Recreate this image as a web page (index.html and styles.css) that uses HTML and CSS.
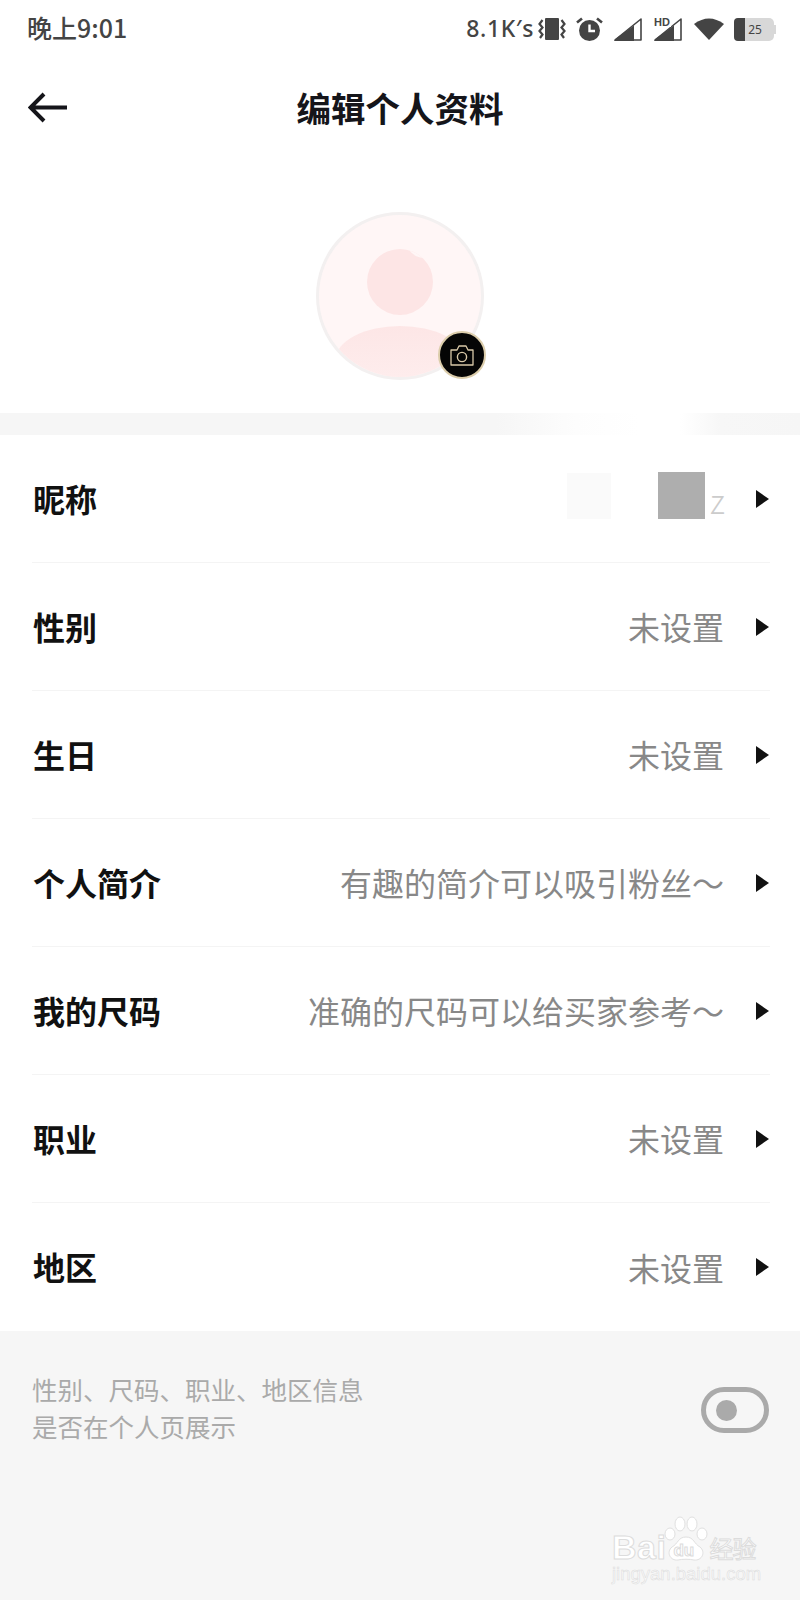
FILE: index.html
```html
<!DOCTYPE html>
<html lang="zh-CN">
<head>
  <meta charset="UTF-8" />
  <meta name="viewport" content="width=device-width, initial-scale=1" />
  <title>编辑个人资料</title>
  <link rel="stylesheet" href="styles.css">
</head>
<body>
  <div class="page">
    <div class="status-bar">
      <span class="status-time">晚上9:01</span>
      <div class="status-icons">
        <span class="status-speed">8.1K′s</span>
        <svg class="icon-vibrate" width="28" height="22" viewBox="0 0 28 22">
          <rect x="7" y="0" width="14" height="22" rx="1" fill="#444"/>
          <path d="M4.5 2 L1.5 6 L4.5 9.5 L1.5 13 L4.5 16.5 L2 20" fill="none" stroke="#444" stroke-width="2.2"/>
          <path d="M23.5 2 L26.5 6 L23.5 9.5 L26.5 13 L23.5 16.5 L26 20" fill="none" stroke="#444" stroke-width="2.2"/>
        </svg>
        <svg class="icon-alarm" width="27" height="24" viewBox="0 0 27 24">
          <circle cx="13.5" cy="13.5" r="10.5" fill="#444"/>
          <path d="M13.5 7.5 V14 H19" fill="none" stroke="#fff" stroke-width="2.4"/>
          <path d="M1 5.5 L6 1.5" stroke="#444" stroke-width="2.6"/>
          <path d="M26 5.5 L21 1.5" stroke="#444" stroke-width="2.6"/>
        </svg>
        <svg class="icon-signal" width="28" height="23" viewBox="0 0 28 23">
          <path d="M27 1 V22 H1 Z" fill="#fff" stroke="#444" stroke-width="1.6" stroke-linejoin="round"/>
          <path d="M20 7.5 V23 H0 L2 20.5 Z" fill="#444"/>
        </svg>
        <svg class="icon-signal-hd" width="28" height="24" viewBox="0 0 28 24">
          <path d="M27 2 V23 H1 Z" fill="#fff" stroke="#444" stroke-width="1.6" stroke-linejoin="round"/>
          <path d="M20 8.5 V24 H0 L2 21.5 Z" fill="#444"/>
          <rect x="0" y="0" width="17" height="10" fill="#fff"/>
          <text class="hd-label" x="0" y="9">HD</text>
        </svg>
        <svg class="icon-wifi" width="30" height="22" viewBox="0 0 30 22">
          <path d="M0 6 Q15 -5 30 6 L15 22 Z" fill="#444"/>
        </svg>
        <div class="battery">
          <span class="battery-level"></span>
          <span class="battery-text">25</span>
        </div>
      </div>
    </div>

    <div class="nav-bar">
      <svg class="nav-back" width="40" height="32" viewBox="0 0 40 32">
        <path d="M39 15.5 H3 M16 2 L2.5 15.5 L16 29" fill="none" stroke="#15151a" stroke-width="4"/>
      </svg>
      <h1 class="nav-title">编辑个人资料</h1>
    </div>

    <div class="avatar-section">
      <div class="avatar">
        <span class="avatar-head"></span>
        <span class="avatar-body"></span>
      </div>
      <div class="avatar-camera">
        <svg width="24" height="21" viewBox="0 0 24 21">
          <path d="M1 5 H7 L9 1 H16 L18 5 H23 V20 H1 Z" fill="none" stroke="#d9c9a8" stroke-width="1.3" stroke-linejoin="round"/>
          <circle cx="12" cy="12" r="4.6" fill="none" stroke="#d9c9a8" stroke-width="1.4"/>
        </svg>
      </div>
    </div>

    <div class="band"></div>

    <div class="form-list">
      <div class="form-row">
        <span class="form-label">昵称</span>
        <div class="form-value nick-value">
          <span class="nick-light"></span>
          <span class="nick-dark"></span>
          <span class="nick-z">z</span>
        </div>
        <span class="form-arrow"></span>
      </div>
      <div class="form-row">
        <span class="form-label">性别</span>
        <span class="form-value">未设置</span>
        <span class="form-arrow"></span>
      </div>
      <div class="form-row">
        <span class="form-label">生日</span>
        <span class="form-value">未设置</span>
        <span class="form-arrow"></span>
      </div>
      <div class="form-row">
        <span class="form-label">个人简介</span>
        <span class="form-value">有趣的简介可以吸引粉丝～</span>
        <span class="form-arrow"></span>
      </div>
      <div class="form-row">
        <span class="form-label">我的尺码</span>
        <span class="form-value">准确的尺码可以给买家参考～</span>
        <span class="form-arrow"></span>
      </div>
      <div class="form-row">
        <span class="form-label">职业</span>
        <span class="form-value">未设置</span>
        <span class="form-arrow"></span>
      </div>
      <div class="form-row">
        <span class="form-label">地区</span>
        <span class="form-value">未设置</span>
        <span class="form-arrow"></span>
      </div>
    </div>

    <div class="footer-section">
      <p class="footer-text">性别、尺码、职业、地区信息<br>是否在个人页展示</p>
      <div class="toggle"><span class="toggle-dot"></span></div>
    </div>

    <div class="watermark">
      <div class="wm-logo">
        <span class="wm-bai">Bai</span>
        <div class="wm-paw">
          <svg width="44" height="46" viewBox="0 0 44 46">
            <ellipse cx="6" cy="18" rx="5" ry="6" fill="#fff" stroke="#e0e0e0"/>
            <ellipse cx="16" cy="8" rx="5" ry="7" fill="#fff" stroke="#e0e0e0"/>
            <ellipse cx="28" cy="8" rx="5" ry="7" fill="#fff" stroke="#e0e0e0"/>
            <ellipse cx="38" cy="18" rx="5" ry="6" fill="#fff" stroke="#e0e0e0"/>
            <path d="M22 21 C30 21 30 28 36 31 C42 36 38 45 30 44 C26 43 18 43 14 44 C6 45 2 36 8 31 C14 28 14 21 22 21 Z" fill="#fff" stroke="#e0e0e0"/>
          </svg>
          <span class="wm-du">du</span>
        </div>
        <span class="wm-cn">经验</span>
      </div>
      <div class="wm-url">jingyan.baidu.com</div>
    </div>
  </div>
</body>
</html>
```

FILE: styles.css
```css
* {
  box-sizing: border-box;
}
body {
  margin: 0;
  font-family: "Noto Sans CJK SC", "Noto Sans", sans-serif;
  background: #f6f6f6;
}
.page {
  position: relative;
  width: 800px;
  height: 1600px;
  overflow: hidden;
  display: flex;
  flex-direction: column;
  background: #f6f6f6;
}

/* status bar */
.status-bar {
  height: 58px;
  padding: 0 24px 0 27px;
  display: flex;
  align-items: center;
  justify-content: space-between;
  background: #fff;
  color: #444;
}
.status-time {
  margin-top: -4px;
  font-size: 25px;
  font-weight: 500;
}
.status-icons {
  display: flex;
  align-items: center;
}
.status-speed {
  margin-top: -2px;
  margin-right: 4px;
  font-family: "Noto Sans", sans-serif;
  font-size: 23px;
  font-weight: 500;
  letter-spacing: 0.6px;
}
.icon-vibrate { margin-right: 10px; }
.icon-alarm { margin-right: 11px; }
.icon-signal { margin-right: 12px; }
.icon-signal-hd { margin-right: 12px; }
.icon-wifi { margin-right: 10px; }
.hd-label {
  font-family: "Liberation Sans", sans-serif;
  font-size: 11px;
  font-weight: 700;
  fill: #444;
}
.battery {
  position: relative;
  width: 40px;
  height: 23px;
  margin-right: 2px;
  border-radius: 5px;
  background: #d8d8d8;
  display: flex;
  align-items: center;
  justify-content: center;
  padding-left: 2px;
}
.battery::after {
  content: "";
  position: absolute;
  right: -2px;
  top: 7px;
  width: 2px;
  height: 9px;
  background: #d8d8d8;
}
.battery-level {
  position: absolute;
  left: 0;
  top: 0;
  bottom: 0;
  width: 11px;
  border-radius: 4px 0 0 4px;
  background: #444;
}
.battery-text {
  font-family: "Noto Sans", sans-serif;
  font-size: 12px;
  color: #444;
}

/* nav */
.nav-bar {
  position: relative;
  height: 100px;
  padding-left: 28px;
  display: flex;
  align-items: center;
  background: #fff;
}
.nav-title {
  position: absolute;
  left: 0;
  right: 0;
  margin: -2px 0 0;
  text-align: center;
  font-size: 34.5px;
  font-weight: 700;
  color: #15151a;
}

/* avatar */
.avatar-section {
  position: relative;
  height: 255px;
  padding-top: 54px;
  display: flex;
  justify-content: center;
  background: #fff;
}
.avatar {
  position: relative;
  width: 168px;
  height: 168px;
  border-radius: 50%;
  border: 3px solid #f3f0f0;
  background: #fff6f6;
  overflow: hidden;
}
.avatar-head {
  position: absolute;
  left: 48px;
  top: 34px;
  width: 66px;
  height: 66px;
  border-radius: 50%;
  overflow: hidden;
  background: #fde5e5;
}
.avatar-head::after {
  content: "";
  position: absolute;
  right: 0;
  top: -9px;
  width: 26px;
  height: 17px;
  border-radius: 50%;
  background: #fff6f6;
  transform: rotate(25deg);
}
.avatar-body {
  position: absolute;
  left: 17px;
  top: 111px;
  width: 128px;
  height: 66px;
  border-radius: 50%;
  background: linear-gradient(180deg, #fde6e6, #feeeee);
}
.avatar-camera {
  position: absolute;
  left: 438px;
  top: 173px;
  width: 48px;
  height: 48px;
  border-radius: 50%;
  border: 2px solid #dccdab;
  background: #050505;
  display: flex;
  align-items: center;
  justify-content: center;
}

.band {
  height: 22px;
  background: linear-gradient(90deg, #f6f6f6 0%, #f6f6f6 62%, #fdfdfd 72%, #fff 80%, #fff 85%, #f7f7f7 90%, #f6f6f6 100%);
}

/* rows */
.form-list {
  padding: 0 30px 0 32px;
  background: #fff;
}
.form-row {
  height: 128px;
  display: flex;
  align-items: center;
  border-bottom: 1px solid #f4f4f4;
}
.form-row:last-child {
  border-bottom: 0;
}
.form-label {
  flex: none;
  margin: -2px 0 0 1px;
  font-size: 32px;
  font-weight: 700;
  color: #111;
}
.form-value {
  flex: 1;
  margin-top: -1px;
  text-align: right;
  font-size: 32px;
  color: #888;
}
.form-arrow {
  flex: none;
  margin-left: 32px;
  margin-right: 1px;
  width: 0;
  height: 0;
  border-left: 13px solid #111;
  border-top: 9px solid transparent;
  border-bottom: 9px solid transparent;
}
.nick-value {
  display: flex;
  justify-content: flex-end;
  align-items: center;
  margin-top: 0;
}
.nick-light {
  width: 44px;
  height: 46px;
  margin-right: 47px;
  margin-bottom: 6px;
  background: #fafafa;
}
.nick-dark {
  width: 47px;
  height: 47px;
  margin-bottom: 6px;
  background: #aeaeae;
}
.nick-z {
  margin-left: 5px;
  margin-top: 3px;
  width: 14px;
  font-size: 33px;
  font-weight: 300;
  line-height: 28px;
  color: #ccc;
}

/* footer */
.footer-section {
  flex: 1;
  padding: 39px 31px 0 32px;
  display: flex;
  justify-content: space-between;
  align-items: flex-start;
}
.footer-text {
  margin: 0;
  font-size: 25.5px;
  line-height: 37px;
  color: #aaa;
}
.toggle {
  width: 68px;
  height: 46px;
  margin-top: 17px;
  padding-left: 10px;
  border: 5px solid #aaa;
  border-radius: 23px;
  display: flex;
  align-items: center;
}
.toggle-dot {
  width: 21px;
  height: 21px;
  border-radius: 50%;
  background: #aaa;
}

/* baidu watermark */
.watermark {
  position: absolute;
  left: 612px;
  top: 1516px;
  width: 146px;
  color: #fff;
}
.wm-logo {
  display: flex;
  align-items: flex-end;
  height: 48px;
  font-family: "Liberation Sans", sans-serif;
  -webkit-text-stroke: 1px #dcdcdc;
}
.wm-bai {
  font-size: 34px;
  font-weight: 700;
  line-height: 34px;
  letter-spacing: 0.5px;
}
.wm-paw {
  position: relative;
  width: 44px;
  height: 48px;
  margin-left: -2px;
}
.wm-du {
  position: absolute;
  left: 9px;
  top: 25px;
  font-size: 17px;
  line-height: 20px;
  font-weight: 700;
}
.wm-cn {
  margin-left: 1px;
  font-family: "Noto Sans CJK SC", sans-serif;
  font-size: 24px;
  line-height: 32px;
  letter-spacing: -1px;
}
.wm-url {
  margin-top: 0;
  font-family: "Liberation Sans", sans-serif;
  font-size: 18.5px;
  line-height: 20px;
  color: #f8f8f8;
  -webkit-text-stroke: 0.5px #dcdcdc;
}
```
